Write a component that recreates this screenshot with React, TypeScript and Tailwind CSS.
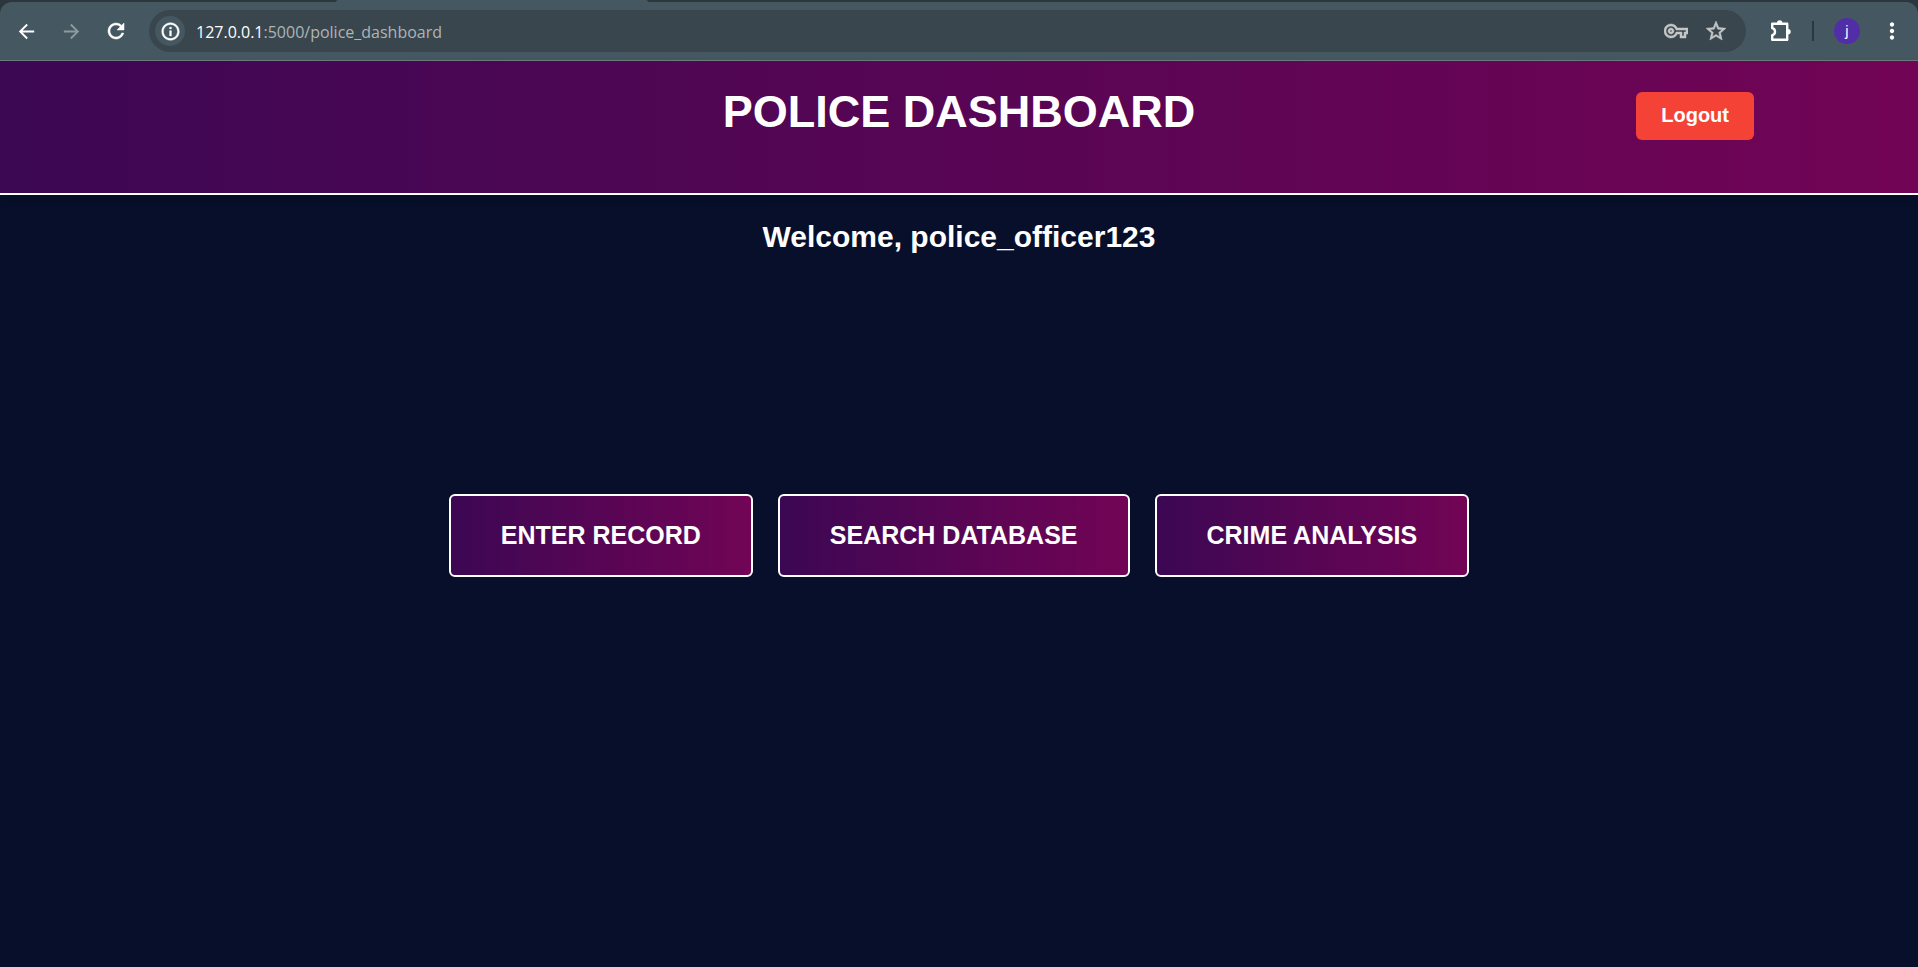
import type { ReactNode } from "react";
import {
  MdArrowBack,
  MdArrowForward,
  MdInfoOutline,
  MdMoreVert,
  MdOutlineVpnKey,
  MdRefresh,
  MdStarBorder,
} from "react-icons/md";

// Thickens an icon's strokes; the first path is the icon's empty bounding box.
const heavy = "[&>path]:stroke-current [&>path]:stroke-[0.5] [&>path:first-child]:stroke-none";

function ToolButton({ label, children, dim = false }: { label: string; children: ReactNode; dim?: boolean }) {
  return (
    <button
      type="button"
      aria-label={label}
      disabled={dim}
      className="flex size-9 items-center justify-center rounded-full text-white disabled:text-[#8f999e]"
    >
      {children}
    </button>
  );
}

function ExtensionIcon() {
  return (
    <svg width="24" height="24" viewBox="0 0 24 24" fill="none" stroke="currentColor" strokeWidth="2.4" strokeLinejoin="round">
      <path d="M4.2 4.7H19.2V20.7H4.2V16.2C6 15.8 7 14.4 7 12.7C7 11 6 9.6 4.2 9.2Z" />
      <path d="M9 4A2.7 2.7 0 0 1 14.4 4ZM20 10A2.7 2.7 0 0 1 20 15.4Z" fill="currentColor" stroke="none" />
    </svg>
  );
}

function BrowserBar() {
  return (
    <div className="bg-[#2b373d]">
      <div className="flex h-0.5">
        <div className="w-84 shrink-0" />
        <div className="w-78 shrink-0 rounded-t-sm bg-[#455760]" />
      </div>
      <div className="flex h-[59px] items-center rounded-t-xl border-b border-[#6f7e80] bg-[#455760] pr-2 pl-2">
        <nav aria-label="Browser" className="flex gap-[9px]">
          <ToolButton label="Back"><MdArrowBack size={23} /></ToolButton>
          <ToolButton label="Forward" dim><MdArrowForward size={23} /></ToolButton>
          <ToolButton label="Reload"><MdRefresh size={24} className={heavy} /></ToolButton>
        </nav>
        <div className="ml-[15px] flex h-[42px] min-w-0 flex-1 items-center rounded-full bg-[#39464d] pr-[18px] pl-[6px]">
          <button type="button" aria-label="Site information" className="flex size-[30px] shrink-0 items-center justify-center rounded-full bg-[#455760] text-white">
            <MdInfoOutline size={21} className={heavy} />
          </button>
          <div aria-label="Address" className="ml-[11px] flex-1 truncate pt-0.5 font-['Open_Sans',sans-serif] text-[16px] leading-6 font-normal text-[#afb4b7]">
            <span className="text-white">127.0.0.1</span>:5000/police_dashboard
          </div>
          <div className="flex items-center gap-4 text-[#c4c6c8]">
            <button type="button" aria-label="Passwords"><MdOutlineVpnKey size={24} className={heavy} /></button>
            <button type="button" aria-label="Bookmark"><MdStarBorder size={24} className={heavy} /></button>
          </div>
        </div>
        <div className="ml-4 flex items-center">
          <ToolButton label="Extensions"><ExtensionIcon /></ToolButton>
          <div className="ml-[14px] h-5 w-0.5 bg-[#2b373d]" />
          <button type="button" aria-label="Profile" className="ml-5 flex size-[26px] items-center justify-center rounded-full bg-[#512da8] font-['Roboto',sans-serif] text-[14px] leading-4 font-normal text-white">
            j
          </button>
          <div className="ml-[14px]">
            <ToolButton label="Menu"><MdMoreVert size={26} /></ToolButton>
          </div>
        </div>
      </div>
    </div>
  );
}

const actions = ["ENTER RECORD", "SEARCH DATABASE", "CRIME ANALYSIS"];

export default function App() {
  return (
    <div className="flex min-h-screen flex-col bg-[#070f2b] font-['Liberation_Sans',Arial,sans-serif] font-bold text-white">
      <BrowserBar />
      <header className="grid grid-cols-[1fr_auto_1fr] items-start border-b-2 border-white bg-linear-to-r/srgb from-[#3c0753] to-[#720455] pt-[26px] pb-[53px] shadow-[0_4px_8px_rgba(0,0,0,0.2)]">
        <h1 className="col-start-2 text-[45px] leading-[50px]">POLICE DASHBOARD</h1>
        <button type="button" className="mt-[5px] mr-[164px] justify-self-end rounded-md bg-[#f44336] px-[25px] pt-[11px] pb-[13px] text-[20px] leading-6">
          Logout
        </button>
      </header>
      <main className="flex flex-1 flex-col">
        <h2 className="mt-6 text-center text-[30px] leading-9">Welcome, police_officer123</h2>
        <div className="mt-[239px] flex flex-wrap justify-center gap-[25px] px-6">
          {actions.map((label) => (
            <button
              key={label}
              type="button"
              className="rounded-md border-2 border-white bg-linear-to-r/srgb from-[#3c0753] to-[#720455] px-[50px] py-[25px] text-[25px] leading-[29px]"
            >
              {label}
            </button>
          ))}
        </div>
      </main>
    </div>
  );
}
